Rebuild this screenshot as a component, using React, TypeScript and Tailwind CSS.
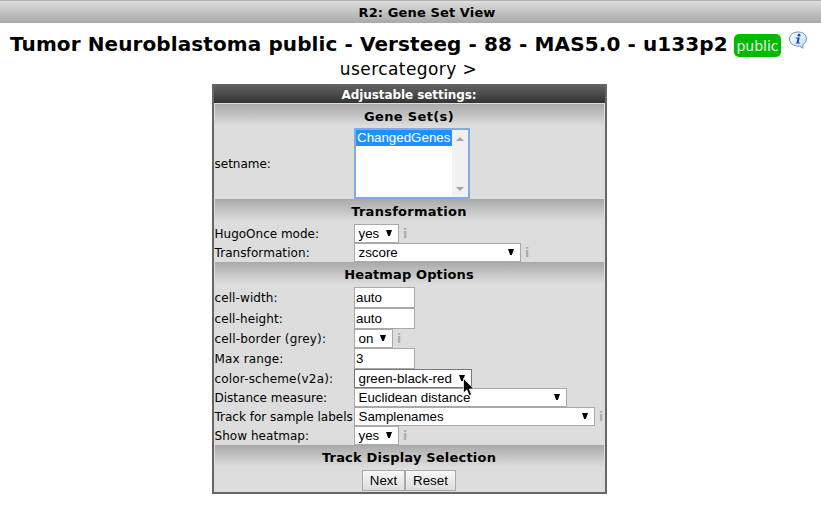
import type { ReactNode } from 'react';

const VERDANA = "font-['DejaVu_Sans',Verdana,sans-serif]";
const ARIAL = "font-['Liberation_Sans',Arial,sans-serif]";

function Section({ title, height = 'h-[25px]', tracking = 'tracking-[0.2px]' }: { title: string; height?: string; tracking?: string }) {
  return (
    <div
      className={`${height} shrink-0 bg-[#ddd] bg-[linear-gradient(#a9a9a9,#dddddd)] bg-[length:100%_22px] bg-no-repeat pr-[1px] text-center text-[13px] leading-[25px] font-bold whitespace-nowrap ${tracking}`}
    >
      {title}
    </div>
  );
}

function Row({ label, height, children, tracking = '' }: { label: string; height: string; children: ReactNode; tracking?: string }) {
  return (
    <div className={`flex shrink-0 items-center ${height}`}>
      <div className={`-ml-[0.5px] w-[139.5px] shrink-0 text-[12px] leading-[18px] whitespace-nowrap ${tracking}`}>{label}</div>
      {children}
    </div>
  );
}

function Select({ value, width, info, active }: { value: string; width: string; info?: boolean; active?: boolean }) {
  return (
    <>
      <div
        className={`flex h-[19px] shrink-0 items-center justify-between border bg-white pr-[5px] pl-[3.5px] ${active ? 'border-[#777]' : 'border-[#a9a9a9]'} ${width} ${ARIAL} text-[13.33px] leading-[17px] whitespace-nowrap`}
      >
        <span>{value}</span>
        <svg width="7" height="7" viewBox="0 0 7 7" className="mb-[2px]">
          <path d="M0 1H6L3.8 7H2.2Z" fill="#000" />
        </svg>
      </div>
      {info && <span className="ml-[4px] text-[12px] leading-[18px] font-bold text-[#aaa]">i</span>}
    </>
  );
}

function Field({ value }: { value: string }) {
  return (
    <div className={`h-[21px] w-[61px] shrink-0 border border-[#a9a9a9] bg-white pl-[1px] ${ARIAL} text-[13.33px] leading-[19px]`}>
      {value}
    </div>
  );
}

function Button({ label, width }: { label: string; width: string }) {
  return (
    <button
      className={`h-[21px] border border-[#a9a9a9] bg-linear-to-b from-[#f8f8f8] to-[#dddddd] ${width} ${ARIAL} text-center text-[13.33px] leading-[19px]`}
    >
      {label}
    </button>
  );
}

export default function App() {
  return (
    <div className={`h-[529px] w-[821px] overflow-hidden bg-white text-black ${VERDANA}`}>
      <div className="h-[23px] border-t border-[#b0b0b0] bg-linear-to-b from-[#dddddd] to-[#a9a9a9] pl-[33px] text-center text-[13px] leading-[24px] font-bold tracking-[0.12px]">
        R2: Gene Set View
      </div>

      <div className="flex h-[35px] items-start pl-[10px] whitespace-nowrap">
        <h1 className="w-[724px] text-[20px] leading-[42px] font-bold tracking-[0.1px]">
          Tumor Neuroblastoma public - Versteeg - 88 - MAS5.0 - u133p2
        </h1>
        <span className="mt-[11px] h-[23px] w-[47px] rounded-[5px] bg-[#00bb00] text-center text-[14px] leading-[25px] text-[#eee]">
          public
        </span>
        <svg width="20" height="20" viewBox="0 0 20 20" className="mt-[8px] ml-[7px]">
          <defs>
            <linearGradient id="bubble" x1="0" y1="0" x2="1" y2="1">
              <stop offset="0" stopColor="#ffffff" />
              <stop offset="1" stopColor="#bcdcf5" />
            </linearGradient>
          </defs>
          <path
            d="M10 1C15 1 18.5 3.8 18.5 7.8C18.5 10.4 17 12.5 14.7 13.8L15 17.3L11.4 15C5.6 15.5 1.4 12.2 1.4 8C1.4 4 5 1 10 1Z"
            fill="url(#bubble)"
            stroke="#7891aa"
            strokeWidth="1"
          />
          <circle cx="11" cy="4.2" r="1.4" fill="#1746b5" />
          <path d="M8 6.4H11.7L10.6 11.6H12L11.7 12.6H7.7L8 11.6H8.7L9.5 7.4H7.8Z" fill="#1746b5" />
        </svg>
      </div>

      <div className="h-[26px] pr-[4px] text-center text-[17px] leading-[22px] tracking-[0.42px]">usercategory &gt;</div>

      <div className="relative ml-[212px] flex h-[410px] w-[395px] flex-col border-x-2 border-b-2 border-[#666] bg-[#ddd]">
        <div className="h-[19px] shrink-0 bg-linear-to-b from-[#666] to-[#333] pr-[1px] text-center text-[12px] leading-[22px] font-bold tracking-[-0.08px] text-white">
          Adjustable settings:
        </div>
        <div className="mt-[1px] mr-[1px] ml-[1px] flex flex-col">
          <Section title="Gene Set(s)" height="h-[24px]" tracking="tracking-[0.35px]" />
          <Row label="setname:" height="h-[71px]">
            <div className={`flex h-[71px] w-[116px] border-2 border-[#85a9e3] bg-white ${ARIAL} text-[13.33px]`}>
              <div className="w-[96px] shrink-0">
                <div className="h-[16px] bg-[#1e90ff] pl-[1px] leading-[16px] text-white">ChangedGenes</div>
              </div>
              <div className="flex flex-1 flex-col items-center justify-between bg-[#f1f1f1] pt-[7px] pb-[6px]">
                <svg width="8" height="4" viewBox="0 0 8 4"><path d="M0 4L4 0L8 4Z" fill="#a3a3a3" /></svg>
                <svg width="8" height="4" viewBox="0 0 8 4"><path d="M0 0L4 4L8 0Z" fill="#a3a3a3" /></svg>
              </div>
            </div>
          </Row>
          <Section title="Transformation" tracking="tracking-[0.27px]" />
          <Row label="HugoOnce mode:" height="h-[19px]"><Select value="yes" width="w-[45px]" info /></Row>
          <Row label="Transformation:" height="h-[19px]" tracking="tracking-[0.08px]"><Select value="zscore" width="w-[167px]" info /></Row>
          <Section title="Heatmap Options" tracking="tracking-[0.12px]" />
          <Row label="cell-width:" height="h-[21px]" tracking="tracking-[0.1px]"><Field value="auto" /></Row>
          <Row label="cell-height:" height="h-[21px]" tracking="tracking-[0.1px]"><Field value="auto" /></Row>
          <Row label="cell-border (grey):" height="h-[19px]" tracking="tracking-[0.16px]"><Select value="on" width="w-[39px]" info /></Row>
          <Row label="Max range:" height="h-[21px]" tracking="tracking-[0.15px]"><Field value="3" /></Row>
          <Row label="color-scheme(v2a):" height="h-[19px]" tracking="tracking-[0.18px]"><Select value="green-black-red" width="w-[118px]" active /></Row>
          <Row label="Distance measure:" height="h-[19px]"><Select value="Euclidean distance" width="w-[213px]" /></Row>
          <Row label="Track for sample labels" height="h-[19px]"><Select value="Samplenames" width="w-[241px]" info /></Row>
          <Row label="Show heatmap:" height="h-[19px]" tracking="tracking-[0.05px]"><Select value="yes" width="w-[45px]" info /></Row>
          <Section title="Track Display Selection" />
          <div className="flex h-[21px] justify-center pr-[1px]">
            <Button label="Next" width="w-[43px]" />
            <Button label="Reset" width="w-[51px]" />
          </div>
        </div>
        <svg width="12" height="19" viewBox="0 0 12 19" className="absolute top-[294px] left-[249px]">
          <path d="M0.5 0.5V15L3.8 11.8L6.2 17.5L8.6 16.5L6.2 11H10.8Z" fill="#000" stroke="#fff" strokeWidth="0.7" />
        </svg>
      </div>
    </div>
  );
}
